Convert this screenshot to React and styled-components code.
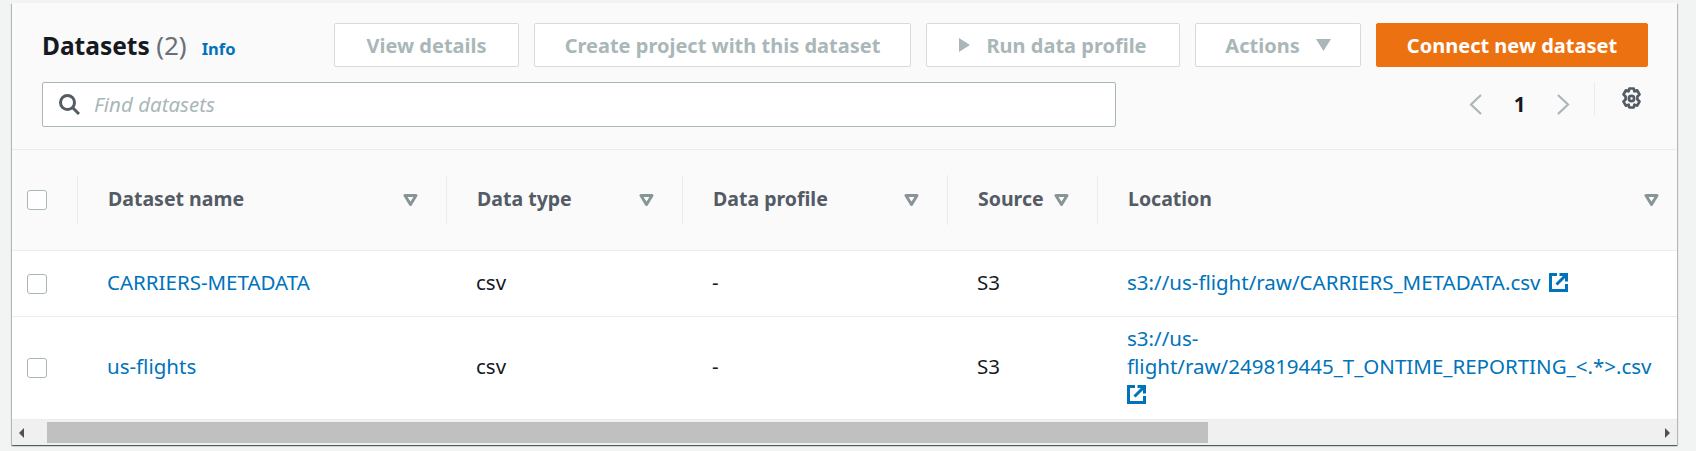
import React from 'react';
import styled, { createGlobalStyle } from 'styled-components';

const GlobalStyle = createGlobalStyle`
  html, body {
    margin: 0;
    background: #f2f3f3;
  }
  body {
    font-family: "Noto Sans", "Open Sans", sans-serif;
    font-size: 20.5px;
    color: #16191f;
  }
`;

const Page = styled.div`
  padding: 3px 19px 7px 12px;
  box-sizing: border-box;
  width: 1696px;
  height: 451px;
  overflow: hidden;
`;

const Panel = styled.section`
  background: #fff;
  box-shadow: 0 1px 1px 0 rgba(0, 28, 36, 0.5), 1px 1px 1px 0 rgba(0, 28, 36, 0.2), -1px 1px 1px 0 rgba(0, 28, 36, 0.2);
`;

const Header = styled.header`
  background: #fafafa;
  height: 147px;
  box-sizing: border-box;
  padding: 20px 29px 0 30px;
  border-bottom: 1px solid #eaeded;
`;

const TopRow = styled.div`
  display: flex;
  align-items: center;
  justify-content: space-between;
`;

const Title = styled.h2`
  margin: 0;
  font-size: 24.5px;
  font-weight: 700;
  color: #16191f;
`;

const Count = styled.span`
  font-size: 26px;
  font-weight: 400;
  color: #687078;
`;

const InfoLink = styled.a`
  margin-left: 15px;
  font-size: 16.5px;
  font-weight: 700;
  color: #0073bb;
`;

const Actions = styled.div`
  display: flex;
  gap: 15px;
`;

const Button = styled.button`
  height: 44px;
  width: ${(p) => p.$width}px;
  box-sizing: border-box;
  display: flex;
  align-items: center;
  justify-content: center;
  gap: ${(p) => p.$gap || 0}px;
  padding: 0;
  border-radius: 2px;
  border: 1px solid ${(p) => (p.$primary ? '#ec7211' : '#d5dbdb')};
  background: ${(p) => (p.$primary ? '#ec7211' : '#fff')};
  color: ${(p) => (p.$primary ? '#fff' : '#aab7b8')};
  font-family: inherit;
  font-size: 20px;
  font-weight: 700;
`;

const FilterRow = styled.div`
  display: flex;
  justify-content: space-between;
  margin-top: 15px;
`;

const Search = styled.div`
  width: 1074px;
  height: 45px;
  box-sizing: border-box;
  display: flex;
  align-items: center;
  gap: 14px;
  padding-left: 16px;
  background: #fff;
  border: 1px solid #aab7b8;
  border-radius: 2px;
  color: #687078;
`;

const SearchText = styled.span`
  margin-top: -2px;
  font-style: italic;
  color: #aab7b8;
`;

const Pager = styled.div`
  display: flex;
  align-items: flex-start;
  height: 34px;
  padding-right: 5px;
`;

const PagerChevron = styled.svg`
  margin-top: 12px;
`;

const PageNumber = styled.span`
  width: 73px;
  margin-top: 8px;
  text-align: center;
  font-weight: 700;
  color: #16191f;
`;

const PagerDivider = styled.div`
  width: 1px;
  height: 34px;
  margin: 0 25px 0 23px;
  background: #eaeded;
`;

const GearSvg = styled.svg`
  margin-top: 5px;
`;

const Table = styled.table`
  width: 100%;
  table-layout: fixed;
  border-collapse: collapse;
`;

const HeadCell = styled.th`
  height: 100px;
  padding: 0;
  background: #fafafa;
  border-bottom: 1px solid #eaeded;
  font-size: 19.5px;
  font-weight: 700;
  text-align: left;
  color: #545b64;
`;

const HeadInner = styled.div`
  height: 50px;
  display: flex;
  align-items: center;
  justify-content: space-between;
  box-sizing: border-box;
  padding: 0 ${(p) => p.$right}px 0 30px;
  border-left: 1px solid #eaeded;
`;

const HeadLabel = styled.span`
  margin-top: -4px;
`;

const CheckCell = styled.td`
  padding: 0 0 0 15px;
`;

const CheckHead = styled(HeadCell)`
  padding-left: 15px;
`;

const Checkbox = styled.span`
  display: block;
  width: 20px;
  height: 20px;
  box-sizing: border-box;
  background: #fff;
  border: 1px solid #aab7b8;
  border-radius: 3px;
`;

const Row = styled.tr`
  height: ${(p) => p.$height}px;
  border-bottom: 1px solid #eaeded;
`;

const Cell = styled.td`
  padding: 7px 22px 11px 30px;
  line-height: 28px;
  color: #16191f;
`;

const Link = styled.a`
  color: #0073bb;
  word-spacing: 3px;
`;

const ExternalIcon = styled.svg`
  width: 19px;
  height: 19px;
  vertical-align: -2px;
`;

const Scrollbar = styled.div`
  height: 25px;
  display: flex;
  align-items: center;
  background: #f0f0f0;
`;

const ScrollTrack = styled.div`
  flex: 1;
  height: 21px;
  padding: 0 0 0 16px;
`;

const ScrollThumb = styled.div`
  width: 1161px;
  height: 100%;
  background: #c0c0c0;
`;

const ScrollArrow = styled.span`
  width: 19px;
  display: flex;
  justify-content: center;
  &::before {
    content: '';
    border-style: solid;
    border-width: 5px 0;
    border-color: transparent;
    ${(p) => (p.$right ? 'border-left: 5px solid #505050;' : 'border-right: 5px solid #505050;')}
  }
`;

const ExternalGlyph = () => (
  <ExternalIcon viewBox="0 0 19 19" fill="none" stroke="#0073bb" strokeWidth="3">
    <path d="M8 1.5H1.5v16h16V11" />
    <path d="M10.500 1.500h7v7M17 2L7.500 11.500" />
  </ExternalIcon>
);

const SortIcon = () => (
  <svg width="15" height="12" viewBox="0 0 15 12" fill="#fff" stroke="#879596" strokeWidth="3" strokeLinejoin="round">
    <path d="M2 1.500h11L7.500 10.500z" />
  </svg>
);

const SearchIcon = () => (
  <svg width="21" height="21" viewBox="0 0 21 21" fill="none" stroke="#545b64" strokeWidth="3">
    <circle cx="8.500" cy="8.500" r="7" />
    <path d="M13.500 13.500l6.500 6.500" />
  </svg>
);

const Chevron = ({ right }) => (
  <PagerChevron width="15" height="21" viewBox="0 0 15 21" fill="none" stroke="#aab7b8" strokeWidth="2.2">
    <path d={right ? 'M2 1l10 9.500L2 20' : 'M13 1L3 10.500 13 20'} />
  </PagerChevron>
);

const GearIcon = () => (
  <GearSvg width="23" height="23" viewBox="0 0 21 23" fill="none" stroke="#545b64" strokeWidth="2.700" strokeLinejoin="round">
    <path d="M8.300 1.500h4.400l.7 2.800 2.800-.9 2.300 4-2.100 2v3.200l2.100 2-2.300 4-2.800-.9-.7 2.800H8.300l-.7-2.800-2.800.9-2.300-4 2.100-2V9.400l-2.100-2 2.300-4 2.800.9z" />
    <circle cx="10.500" cy="11.500" r="2.600" />
  </GearSvg>
);

const columns = [
  { label: 'Dataset name', width: 369, right: 28 },
  { label: 'Data type', width: 236, right: 28 },
  { label: 'Data profile', width: 265, right: 28 },
  { label: 'Source', width: 150, right: 28 },
  { label: 'Location', right: 18 },
];

const rows = [
  {
    name: 'CARRIERS-METADATA',
    location: 's3://us-flight/raw/CARRIERS_METADATA.csv',
    height: 66,
  },
  {
    name: 'us-flights',
    location: 's3://us-flight/raw/249819445_T_ONTIME_REPORTING_<.*>.csv',
    height: 102,
  },
];

const App = () => {
  return (
    <Page>
      <GlobalStyle />
      <Panel>
        <Header>
          <TopRow>
            <Title>
              Datasets <Count>(2)</Count>
              <InfoLink>Info</InfoLink>
            </Title>
            <Actions>
              <Button $width={185}>View details</Button>
              <Button $width={377}>Create project with this dataset</Button>
              <Button $width={254} $gap={16}>
                <svg width="11" height="14" viewBox="0 0 11 14" fill="#aab7b8">
                  <path d="M0 0l11 7-11 7z" />
                </svg>
                Run data profile
              </Button>
              <Button $width={166} $gap={16}>
                Actions
                <svg width="15" height="12" viewBox="0 0 15 12" fill="#aab7b8">
                  <path d="M0 0h15L7.500 12z" />
                </svg>
              </Button>
              <Button $width={272} $primary>Connect new dataset</Button>
            </Actions>
          </TopRow>
          <FilterRow>
            <Search>
              <SearchIcon />
              <SearchText>Find datasets</SearchText>
            </Search>
            <Pager>
              <Chevron />
              <PageNumber>1</PageNumber>
              <Chevron right />
              <PagerDivider />
              <GearIcon />
            </Pager>
          </FilterRow>
        </Header>
        <Table>
          <colgroup>
            <col width="65" />
            {columns.map((c) => (
              <col key={c.label} width={c.width} />
            ))}
          </colgroup>
          <thead>
            <tr>
              <CheckHead>
                <Checkbox />
              </CheckHead>
              {columns.map((c) => (
                <HeadCell key={c.label}>
                  <HeadInner $right={c.right}>
                    <HeadLabel>{c.label}</HeadLabel>
                    <SortIcon />
                  </HeadInner>
                </HeadCell>
              ))}
            </tr>
          </thead>
          <tbody>
            {rows.map((r) => (
              <Row key={r.name} $height={r.height}>
                <CheckCell>
                  <Checkbox />
                </CheckCell>
                <Cell>
                  <Link>{r.name}</Link>
                </Cell>
                <Cell>csv</Cell>
                <Cell>-</Cell>
                <Cell>S3</Cell>
                <Cell>
                  <Link>
                    {r.location} <ExternalGlyph />
                  </Link>
                </Cell>
              </Row>
            ))}
          </tbody>
        </Table>
        <Scrollbar>
          <ScrollArrow />
          <ScrollTrack>
            <ScrollThumb />
          </ScrollTrack>
          <ScrollArrow $right />
        </Scrollbar>
      </Panel>
    </Page>
  );
};

export default App;
